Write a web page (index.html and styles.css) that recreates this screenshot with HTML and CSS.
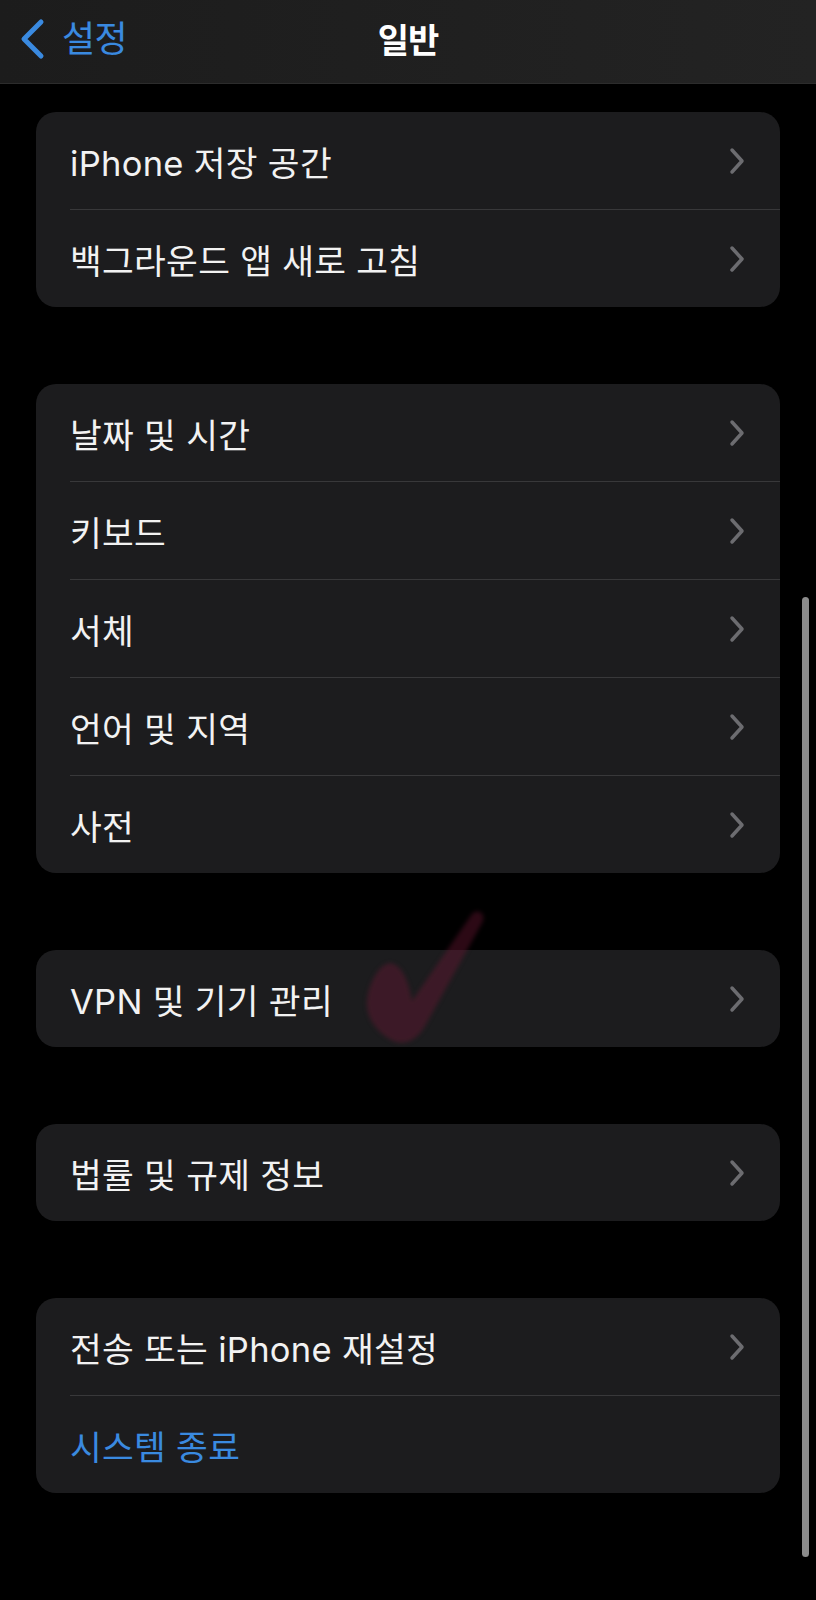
FILE: index.html
```html
<!DOCTYPE html>
<html lang="ko">
<head>
    <meta charset="UTF-8">
    <title>일반</title>
    <link rel="stylesheet" href="styles.css">
</head>
<body>
    <div class="navbar">
        <div class="back">
            <svg class="back-chev" viewBox="0 0 28 42" width="28" height="42">
                <polyline points="23,4 6,21 23,38" fill="none" stroke="#3a8ae0" stroke-width="5" stroke-linecap="round" stroke-linejoin="round"/>
            </svg>
            <span class="back-label">설정</span>
        </div>
        <div class="title">일반</div>
    </div>

    <div class="content">
        <div class="group">
            <div class="row"><div class="row-inner"><span class="label">iPhone 저장 공간</span><svg class="chev" viewBox="0 0 18 28" width="18" height="28"><polyline points="4,3 14,14 4,25"/></svg></div></div>
            <div class="row"><div class="row-inner"><span class="label">백그라운드 앱 새로 고침</span><svg class="chev" viewBox="0 0 18 28" width="18" height="28"><polyline points="4,3 14,14 4,25"/></svg></div></div>
        </div>

        <div class="group">
            <div class="row"><div class="row-inner"><span class="label">날짜 및 시간</span><svg class="chev" viewBox="0 0 18 28" width="18" height="28"><polyline points="4,3 14,14 4,25"/></svg></div></div>
            <div class="row"><div class="row-inner"><span class="label">키보드</span><svg class="chev" viewBox="0 0 18 28" width="18" height="28"><polyline points="4,3 14,14 4,25"/></svg></div></div>
            <div class="row"><div class="row-inner"><span class="label">서체</span><svg class="chev" viewBox="0 0 18 28" width="18" height="28"><polyline points="4,3 14,14 4,25"/></svg></div></div>
            <div class="row"><div class="row-inner"><span class="label">언어 및 지역</span><svg class="chev" viewBox="0 0 18 28" width="18" height="28"><polyline points="4,3 14,14 4,25"/></svg></div></div>
            <div class="row"><div class="row-inner"><span class="label">사전</span><svg class="chev" viewBox="0 0 18 28" width="18" height="28"><polyline points="4,3 14,14 4,25"/></svg></div></div>
        </div>

        <div class="group">
            <div class="row"><div class="row-inner"><span class="label">VPN 및 기기 관리</span><svg class="chev" viewBox="0 0 18 28" width="18" height="28"><polyline points="4,3 14,14 4,25"/></svg></div></div>
        </div>

        <div class="group">
            <div class="row"><div class="row-inner"><span class="label">법률 및 규제 정보</span><svg class="chev" viewBox="0 0 18 28" width="18" height="28"><polyline points="4,3 14,14 4,25"/></svg></div></div>
        </div>

        <div class="group">
            <div class="row"><div class="row-inner"><span class="label">전송 또는 iPhone 재설정</span><svg class="chev" viewBox="0 0 18 28" width="18" height="28"><polyline points="4,3 14,14 4,25"/></svg></div></div>
            <div class="row"><div class="row-inner"><span class="label blue">시스템 종료</span></div></div>
        </div>
    </div>

    <!-- hand-drawn check mark over the screenshot -->
    <svg class="mark" viewBox="0 0 140 145" width="140" height="145">
        <path d="M35 58 C48 60 54 78 57 96 L117 9 C123 3 132 9 127 18 L70 121 C62 135 50 141 38 136 C22 128 10 112 12 95 C14 78 24 59 35 58 Z"/>
    </svg>

    <div class="scrollbar"></div>
</body>
</html>
```

FILE: styles.css
```css
body {
    margin: 0;
    background: #000;
    font-family: 'Inter', 'Noto Sans CJK KR', sans-serif;
    color: #f2f2f2;
    min-height: 1600px;
    position: relative;
}

.navbar {
    height: 83px;
    background: linear-gradient(to right, #1c1c1c, #232323);
    border-bottom: 1px solid #2c2c2c;
    display: flex;
    align-items: center;
    justify-content: center;
    position: relative;
}

.back {
    position: absolute;
    left: 18px;
    top: 18px;
    display: flex;
    align-items: center;
    gap: 16px;
}

.back-label {
    color: #3a8ae0;
    font-size: 36px;
    letter-spacing: -0.5px;
    line-height: 40px;
}

.title {
    font-size: 34px;
    font-weight: 700;
    letter-spacing: -1px;
    color: #fff;
    margin-top: -6px;
}

.content {
    padding: 28px 36px 0;
    display: flex;
    flex-direction: column;
    gap: 77px;
}

.group {
    background: #1c1c1e;
    border-radius: 20px;
    overflow: hidden;
}

.row {
    padding-left: 34px;
}

.row-inner {
    height: 97px;
    display: flex;
    align-items: center;
    justify-content: space-between;
    padding-right: 34px;
    border-bottom: 1px solid #38383a;
}

.row:last-child .row-inner {
    border-bottom: none;
}

.label {
    font-size: 34.5px;
    letter-spacing: 0.3px;
}

.label.blue {
    color: #3a8ae0;
}

.chev polyline {
    fill: none;
    stroke: #6c6c70;
    stroke-width: 3.5;
    stroke-linecap: round;
    stroke-linejoin: round;
}

.mark {
    position: absolute;
    left: 355px;
    top: 905px;
    filter: blur(2px);
}

.mark path {
    fill: rgba(110, 22, 52, 0.4);
}

.scrollbar {
    position: absolute;
    left: 802px;
    top: 597px;
    width: 7px;
    height: 960px;
    border-radius: 4px;
    background: #8c8c8c;
}
```
